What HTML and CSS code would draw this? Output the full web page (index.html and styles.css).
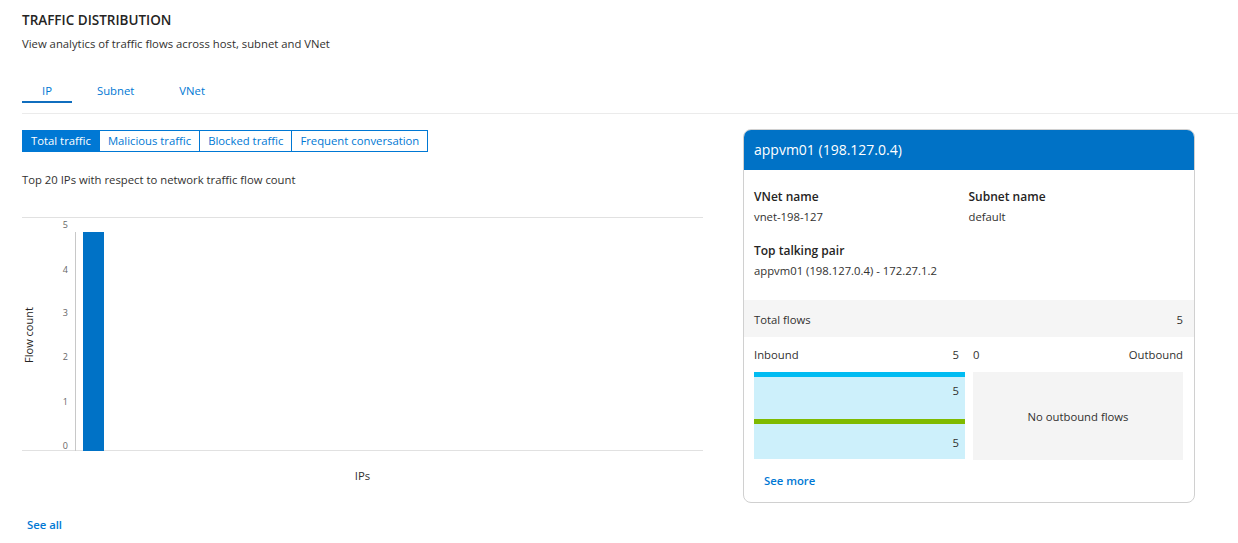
FILE: index.html
```html
<!DOCTYPE html>
<html lang="en">
<head>
    <meta charset="UTF-8">
    <title>Traffic distribution</title>
    <link rel="stylesheet" href="styles.css">
</head>
<body>
    <div class="page">
        <h1 class="title">TRAFFIC DISTRIBUTION</h1>
        <p class="subtitle">View analytics of traffic flows across host, subnet and VNet</p>

        <div class="tabs">
            <span class="tab active">IP</span>
            <span class="tab">Subnet</span>
            <span class="tab">VNet</span>
        </div>

        <div class="content">
            <div class="left">
                <div class="segments">
                    <span class="segment selected">Total traffic</span>
                    <span class="segment">Malicious traffic</span>
                    <span class="segment">Blocked traffic</span>
                    <span class="segment">Frequent conversation</span>
                </div>
                <p class="caption">Top 20 IPs with respect to network traffic flow count</p>

                <!-- chart -->
                <svg class="chart" width="681" height="235" viewBox="0 0 681 235">
                    <line x1="0" y1="0.5" x2="681" y2="0.5" class="grid"/>
                    <line x1="0" y1="233.5" x2="681" y2="233.5" class="grid"/>
                    <line x1="53.5" y1="15" x2="53.5" y2="234" class="axis"/>
                    <text class="tick" x="46" y="11">5</text>
                    <text class="tick" x="46" y="56">4</text>
                    <text class="tick" x="46" y="99">3</text>
                    <text class="tick" x="46" y="143">2</text>
                    <text class="tick" x="46" y="188">1</text>
                    <text class="tick" x="46" y="232">0</text>
                    <text class="y-title" transform="translate(11 118) rotate(-90)">Flow count</text>
                    <rect x="61" y="15" width="21" height="219" class="bar"/>
                </svg>
                <div class="x-title">IPs</div>
                <a class="link see-all">See all</a>
            </div>

            <div class="card">
                <div class="card-header">appvm01 (198.127.0.4)</div>
                <div class="card-body">
                    <div class="field">
                        <div class="label">VNet name</div>
                        <div class="value">vnet-198-127</div>
                    </div>
                    <div class="field">
                        <div class="label">Subnet name</div>
                        <div class="value">default</div>
                    </div>
                    <div class="field wide">
                        <div class="label">Top talking pair</div>
                        <div class="value">appvm01 (198.127.0.4) - 172.27.1.2</div>
                    </div>
                </div>
                <div class="total">
                    <span>Total flows</span>
                    <span>5</span>
                </div>
                <div class="flows">
                    <div class="flow-col">
                        <div class="flow-head inbound-head"><span>Inbound</span><span>5</span></div>
                        <div class="inbound">
                            <div class="seg seg-top">5</div>
                            <div class="seg seg-bottom">5</div>
                        </div>
                    </div>
                    <div class="flow-col">
                        <div class="flow-head"><span>0</span><span>Outbound</span></div>
                        <div class="outbound">No outbound flows</div>
                    </div>
                </div>
                <a class="link see-more">See more</a>
            </div>
        </div>
    </div>
</body>
</html>
```

FILE: styles.css
```css
:root {
    --blue: #0072c6;
    --link: #0078d4;
    --text: #323130;
    --line: #e1e1e1;
}

* {
    box-sizing: border-box;
}

body {
    margin: 0;
    font-family: 'Open Sans', 'Noto Sans', sans-serif;
    font-size: 11.3px;
    color: var(--text);
    background: #fff;
}

.page {
    padding-left: 22px;
}

.title {
    margin: 10px 0 0;
    font-size: 13.5px;
    line-height: 20px;
    font-weight: 600;
    color: #252423;
}

.subtitle {
    margin: 6px 0 0;
    line-height: 16px;
}

/* tabs */
.tabs {
    display: flex;
    gap: 5px;
    margin-top: 31px;
    padding-bottom: 10px;
    border-bottom: 1px solid #ebebeb;
}

.tab {
    padding: 0 20px 2px;
    line-height: 16px;
    color: var(--link);
    border-bottom: 2px solid transparent;
}

.tab.active {
    border-bottom-color: #106ebe;
}

.content {
    display: flex;
    gap: 40px;
    margin-top: 16px;
}

.left {
    width: 681px;
}

.segments {
    display: flex;
}

.segment {
    padding: 0 8px;
    line-height: 20px;
    border: 1px solid var(--link);
    color: var(--link);
}

.segment + .segment {
    border-left: none;
}

.segment.selected {
    background: var(--link);
    color: #fff;
}

.caption {
    margin: 20px 0 0;
    line-height: 16px;
}

.chart {
    display: block;
    margin-top: 29px;
}

.chart .grid {
    stroke: var(--line);
    stroke-width: 1;
}

.chart .axis {
    stroke: #c8c8c8;
    stroke-width: 1;
}

.chart .tick {
    font-size: 9px;
    fill: #666;
    text-anchor: end;
}

.chart .y-title {
    font-size: 11px;
    fill: #252423;
    text-anchor: middle;
}

.chart .bar {
    fill: var(--blue);
}

.x-title {
    margin-top: 16px;
    text-align: center;
    line-height: 16px;
}

.link {
    display: block;
    color: var(--link);
    font-weight: 600;
    line-height: 16px;
    cursor: pointer;
}

.see-all {
    margin-top: 33px;
    padding-left: 5px;
}

/* details card */
.card {
    width: 452px;
    margin-top: -1px;
    align-self: flex-start;
    border: 1px solid #d0d0d0;
    border-radius: 8px;
    overflow: hidden;
}

.card-header {
    height: 40px;
    padding: 0 10px;
    line-height: 40px;
    background: var(--blue);
    color: #fff;
    font-size: 14px;
}

.card-body {
    display: grid;
    grid-template-columns: 1fr 1fr;
    row-gap: 17px;
    padding: 18px 11px 21px 10px;
}

.field.wide {
    grid-column: 1 / 3;
}

.label {
    font-size: 12px;
    font-weight: 600;
    line-height: 18px;
    color: #252423;
}

.value {
    margin-top: 3px;
    line-height: 16px;
}

.total {
    display: flex;
    justify-content: space-between;
    align-items: center;
    height: 37px;
    padding: 2px 11px 0 10px;
    background: #f5f5f5;
}

.flows {
    display: grid;
    grid-template-columns: 211px 210px;
    gap: 8px;
    padding: 10px 11px 0 10px;
}

.flow-head {
    display: flex;
    justify-content: space-between;
    line-height: 16px;
    margin-bottom: 9px;
}

.inbound-head {
    padding-right: 6px;
}

.inbound {
    background: #cdf0fb;
}

.seg {
    text-align: right;
    padding-right: 6px;
    line-height: 16px;
}

.seg-top {
    height: 47px;
    padding-top: 6px;
    border-top: 5px solid #00bcf2;
}

.seg-bottom {
    height: 40px;
    padding-top: 11px;
    border-top: 5px solid #7fba00;
}

.outbound {
    display: flex;
    align-items: center;
    justify-content: center;
    height: 88px;
    background: #f4f4f4;
}

.see-more {
    margin-top: 13px;
    padding: 0 0 13px 20px;
}
```
